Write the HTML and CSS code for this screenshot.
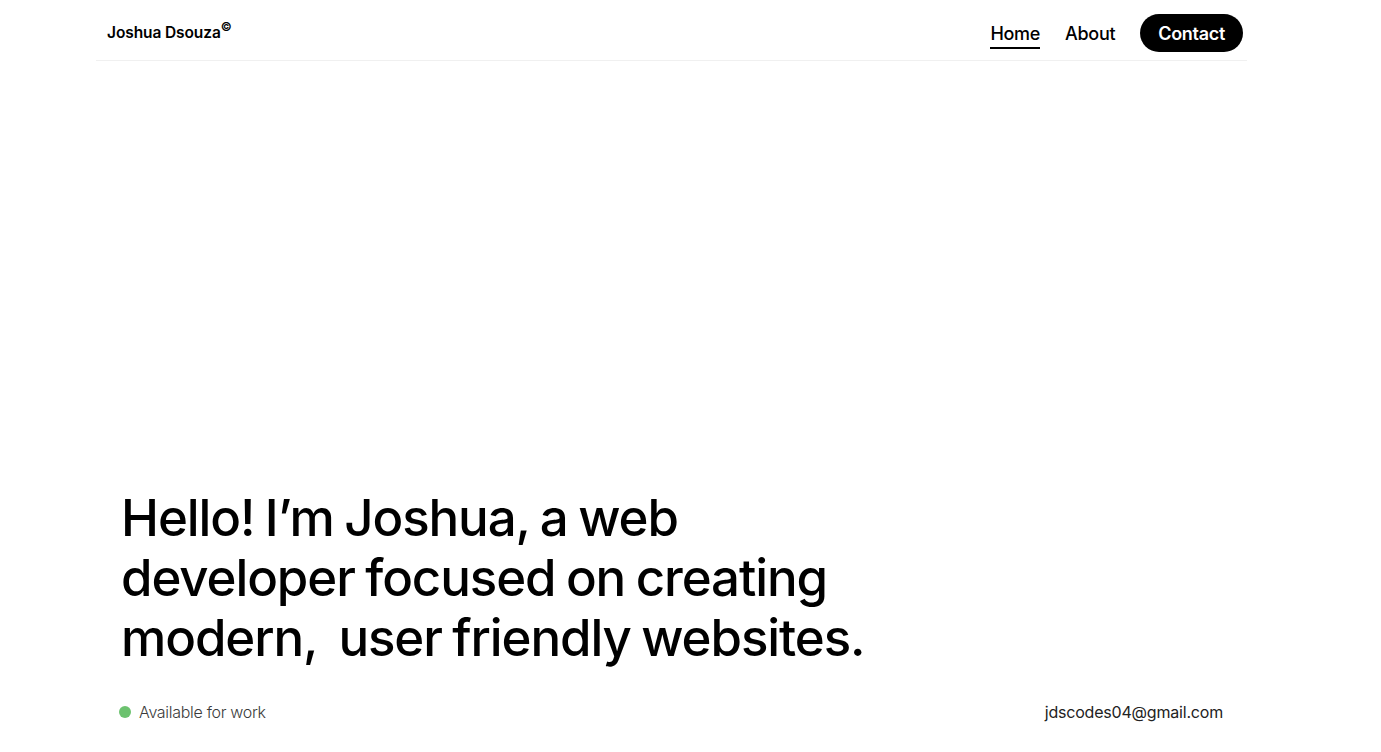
FILE: index.html
```html
<!DOCTYPE html>
<html lang="en">
<head>
<meta charset="utf-8">
<title>Joshua Dsouza</title>
<link rel="stylesheet" href="styles.css">
</head>
<body>
<div class="page">
  <header class="header">
    <div class="logo">Joshua Dsouza<sup class="copy">©</sup></div>
    <nav class="nav">
      <a class="nav-link active" href="#">Home</a>
      <a class="nav-link" href="#">About</a>
      <a class="contact-btn" href="#">Contact</a>
    </nav>
  </header>
  <main class="hero">
    <h1 class="headline">Hello! I’m Joshua, a web<br>developer focused on creating<br>modern,&nbsp; user friendly websites.</h1>
    <div class="meta">
      <div class="status"><span class="dot"></span>Available for work</div>
      <div class="email">jdscodes04@gmail.com</div>
    </div>
  </main>
</div>
</body>
</html>
```
FILE: styles.css
```css
* { box-sizing: border-box; }
html, body { margin: 0; padding: 0; background: #fff; }
body {
  font-family: Inter, "Noto Sans", "Liberation Sans", sans-serif;
  color: #000;
}
.page {
  height: 752px;
  display: flex;
  flex-direction: column;
}
.header {
  margin-left: 96px;
  width: 1151px;
  height: 61px;
  border-bottom: 1px solid #f0f0f0;
  display: flex;
  align-items: center;
  justify-content: space-between;
  padding: 0 4px 0 11px;
}
.logo {
  font-size: 15.5px;
  font-weight: 600;
  letter-spacing: -0.1px;
  margin-top: 2px;
}
.copy {
  font-size: 12px;
  font-weight: 600;
  position: relative;
  top: -1px;
}
.nav {
  display: flex;
  align-items: center;
  margin-top: 6px;
}
.nav-link {
  color: #000;
  text-decoration: none;
  font-size: 18px;
  font-weight: 500;
  letter-spacing: -0.3px;
  margin-right: 25px;
  padding: 6px 0 3px;
  border-bottom: 2px solid transparent;
}
.nav-link.active { border-bottom-color: #000; }
.contact-btn {
  background: #000;
  color: #fff;
  text-decoration: none;
  font-size: 18px;
  font-weight: 600;
  letter-spacing: -0.3px;
  height: 38px;
  padding: 0 18px;
  border-radius: 19px;
  display: flex;
  align-items: center;
}
.hero {
  flex: 1;
  display: flex;
  flex-direction: column;
  justify-content: flex-end;
  padding: 0 158px 30px 119px;
}
.headline {
  margin: 0 0 34px 2px;
  font-size: 51px;
  line-height: 60px;
  font-weight: 450;
  letter-spacing: -1.1px;
  word-spacing: -2px;
}
.meta {
  display: flex;
  justify-content: space-between;
  align-items: center;
}
.status {
  display: flex;
  align-items: center;
  font-size: 16px;
  font-weight: 300;
  color: #3a3a3a;
  letter-spacing: -0.3px;
}
.dot {
  width: 12px;
  height: 12px;
  border-radius: 50%;
  background: #6cc26f;
  margin-right: 8px;
}
.email {
  font-size: 16px;
  font-weight: 400;
  color: #222;
  letter-spacing: -0.2px;
}
```
